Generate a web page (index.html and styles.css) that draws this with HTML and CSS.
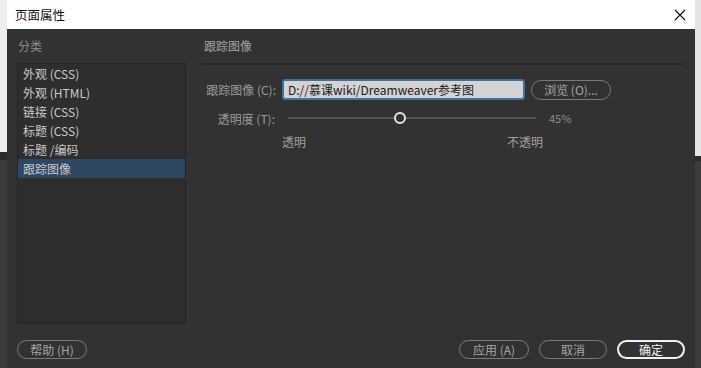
FILE: index.html
```html
<!DOCTYPE html>
<html lang="zh">
<head>
<meta charset="utf-8">
<link rel="stylesheet" href="styles.css">
</head>
<body>
<div class="page">
  <div class="edge edge-left"></div>
  <div class="dialog">
    <div class="titlebar">
      <span class="title">页面属性</span>
      <svg class="close" width="12" height="12" viewBox="0 0 12 12"><path d="M1 1 L11 11 M11 1 L1 11" stroke="#111" stroke-width="1.1" fill="none"/></svg>
    </div>
    <div class="body">
      <div class="columns">
        <div class="left">
          <div class="heading">分类</div>
          <ul class="list">
            <li>外观 (CSS)</li>
            <li>外观 (HTML)</li>
            <li>链接 (CSS)</li>
            <li>标题 (CSS)</li>
            <li>标题 /编码</li>
            <li class="selected">跟踪图像</li>
          </ul>
        </div>
        <div class="right">
          <div class="heading rhead">跟踪图像</div>
          <div class="rule"></div>
          <div class="row row-file">
            <label class="lbl">跟踪图像 (C):</label>
            <div class="input">D://慕课wiki/Dreamweaver参考图</div>
            <button class="btn browse">浏览 (O)...</button>
          </div>
          <div class="row row-slider">
            <label class="lbl">透明度 (T):</label>
            <div class="slider">
              <div class="track"></div>
              <div class="thumb"></div>
            </div>
            <span class="pct">45%</span>
          </div>
          <div class="row row-ends">
            <span>透明</span>
            <span>不透明</span>
          </div>
        </div>
      </div>
      <div class="footer">
        <button class="btn">帮助 (H)</button>
        <div class="spacer"></div>
        <button class="btn w70">应用 (A)</button>
        <button class="btn w68">取消</button>
        <button class="btn ok">确定</button>
      </div>
    </div>
  </div>
  <div class="edge edge-right"></div>
</div>
</body>
</html>
```

FILE: styles.css
```css
html, body {
  margin: 0;
  padding: 0;
  background: #3a3a3a;
}
body {
  font-family: "Noto Sans CJK SC", "Noto Sans", sans-serif;
  font-size: 12px;
}
.page {
  display: flex;
  width: 701px;
  height: 368px;
  overflow: hidden;
}
.edge {
  flex: none;
}
.edge-left {
  width: 7px;
  background: linear-gradient(to bottom, #eeeeee 0, #eeeeee 152px, #2a2a2a 152px, #2a2a2a 160px, #3a3a3a 160px);
}
.edge-right {
  width: 6px;
  background: linear-gradient(to bottom, #e4e4e4 0, #e4e4e4 156px, #2c2c2c 156px, #2c2c2c 161px, #3d3d3d 161px);
}
.dialog {
  flex: 1;
  display: flex;
  flex-direction: column;
  background: #323232;
}
.titlebar {
  height: 29px;
  background: #ffffff;
  display: flex;
  align-items: center;
  justify-content: space-between;
  padding: 0 9px 0 8px;
}
.title {
  color: #111;
  font-size: 12.5px;
  line-height: 14px;
}
.close {
  display: block;
}
.body {
  flex: 1;
  display: flex;
  flex-direction: column;
  padding: 10px 10px 9px 10px;
}
.columns {
  display: flex;
  flex: 1;
}
.left {
  width: 169px;
  display: flex;
  flex-direction: column;
}
.heading {
  color: #8c8c8c;
  font-size: 12px;
  line-height: 14px;
  padding-left: 1px;
  height: 24px;
}
.list {
  list-style: none;
  margin: 0;
  padding: 0;
  flex: 1;
  background: #2e2e2e;
  border: 1px solid #242424;
  border-radius: 2px;
}
.list li {
  color: #cacaca;
  height: 19px;
  line-height: 19px;
  padding-left: 5px;
  font-size: 12px;
}
.list li.selected {
  background: #2f4861;
}
.right {
  flex: 1;
  display: flex;
  flex-direction: column;
  padding-left: 14px;
}
.rhead {
  padding-left: 4px;
  color: #a4a4a4;
}
.rule {
  height: 2px;
  background: #2a2a2a;
  margin: 0 0 0 1px;
  border-bottom: 1px solid #363636;
}
.row {
  display: flex;
  align-items: center;
}
.row-file {
  margin-top: 13px;
  height: 21px;
}
.lbl {
  width: 76px;
  text-align: right;
  color: #9a9a9a;
  font-size: 12px;
  white-space: nowrap;
  margin-right: 6px;
}
.input {
  width: 235px;
  height: 17px;
  line-height: 17px;
  background: #d3d3d3;
  border: 2px solid #3f6ea8;
  border-radius: 3px;
  color: #1a1a1a;
  padding-left: 4px;
  font-size: 12px;
  white-space: nowrap;
  overflow: hidden;
}
.btn {
  font-family: inherit;
  font-size: 12px;
  color: #a6a6a6;
  background: transparent;
  border: 1px solid #7a7a7a;
  border-radius: 10px;
  height: 19px;
  width: 70px;
  padding: 0;
  line-height: 16px;
}
.browse {
  margin-left: 6px;
  width: 80px;
  height: 20px;
}
.row-slider {
  margin-top: 10px;
  height: 16px;
}
.row-slider .lbl {
  width: 75px;
  margin-right: 13px;
}
.slider {
  position: relative;
  width: 248px;
  height: 12px;
}
.track {
  position: absolute;
  left: 0;
  right: 0;
  top: 5px;
  height: 2px;
  background: #555555;
}
.thumb {
  position: absolute;
  left: 106px;
  top: 0;
  width: 8px;
  height: 8px;
  border: 2px solid #e6e6e6;
  border-radius: 50%;
  background: #323232;
}
.pct {
  margin-left: 13px;
  color: #8e8e8e;
  font-size: 11px;
}
.row-ends {
  margin-top: 8px;
  padding-left: 82px;
  width: 261px;
  justify-content: space-between;
  color: #a0a0a0;
  font-size: 12px;
  line-height: 16px;
}
.footer {
  display: flex;
  align-items: center;
  margin-top: 16px;
  height: 19px;
}
.spacer {
  flex: 1;
}
.footer .btn + .btn {
  margin-left: 10px;
}
.w70 { width: 70px; }
.w68 { width: 68px; }
.ok {
  width: 68px;
  border: 2px solid #f2f2f2;
  color: #f2f2f2;
}
```
